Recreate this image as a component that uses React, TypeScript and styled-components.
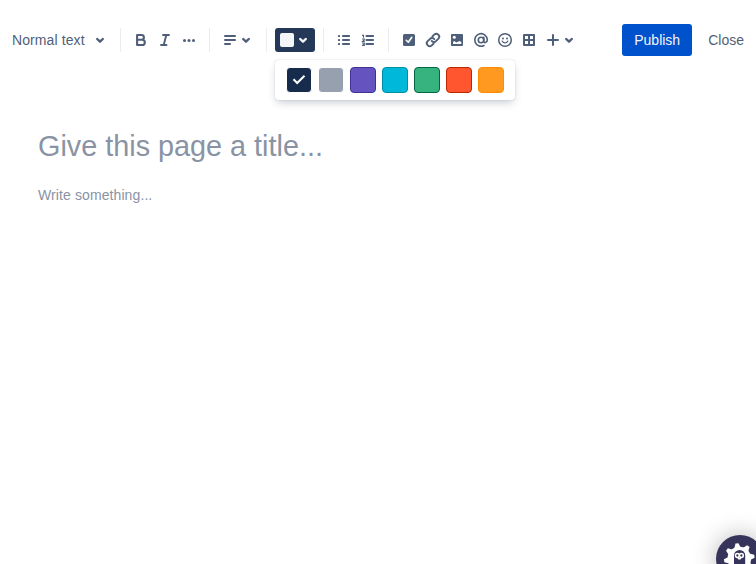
import React from "react";
import styled, { createGlobalStyle } from "styled-components";

const GlobalStyle = createGlobalStyle`
  * { box-sizing: border-box; }
  html, body { margin: 0; height: 100%; overflow: hidden; background: #fff; }
  body { font-family: "Liberation Sans", Arial, sans-serif; font-size: 14px; line-height: 20px; color: #505f79; }
  button { font: inherit; border: 0; margin: 0; padding: 0; background: none; color: inherit; }
`;

const Toolbar = styled.header`
  display: flex;
  align-items: center;
  height: 80px;
  padding: 0 12px;
`;

const Group = styled.div`
  display: flex;
  align-items: center;
  height: 24px;
  & + & {
    margin-left: 8px;
    padding-left: 8px;
    border-left: 1px solid #ebecf0;
  }
`;

const StyleSelect = styled.button`
  display: flex;
  align-items: center;
  justify-content: space-between;
  width: 100px;
  height: 24px;
  white-space: nowrap;
  letter-spacing: 0.1px;
`;

const IconButton = styled.button`
  display: flex;
  width: 24px;
  height: 24px;
`;

const MenuButton = styled.button`
  display: flex;
  width: 40px;
  height: 24px;
  svg + svg { margin-left: -8px; }
`;

const ColorAnchor = styled.div`
  position: relative;
`;

const ColorButton = styled.button`
  display: flex;
  align-items: center;
  width: 40px;
  height: 24px;
  padding-left: 5px;
  border-radius: 3px;
  background: #253858;
  color: #f4f5f7;
  svg { margin-left: -3px; }
`;

const CurrentColor = styled.span`
  width: 14px;
  height: 14px;
  border-radius: 2px;
  background: #f4f5f7;
  flex: none;
`;

const Palette = styled.div`
  position: absolute;
  top: 32px;
  left: 0;
  display: flex;
  align-items: center;
  gap: 6px;
  width: 240px;
  height: 40px;
  padding: 0 11px;
  border-radius: 3px;
  background: #fff;
  box-shadow: 0 4px 8px -2px rgba(9, 30, 66, 0.25), 0 0 1px rgba(9, 30, 66, 0.31);
`;

const Swatch = styled.button<{ $fill: string; $edge: string }>`
  display: flex;
  align-items: center;
  justify-content: center;
  width: 26px;
  height: 26px;
  flex: none;
  color: #fff;
  border: 1px solid ${(p) => p.$edge};
  border-radius: 4px;
  background: ${(p) => p.$fill};
`;

const Actions = styled.div`
  display: flex;
  align-items: center;
  gap: 16px;
  margin-left: auto;
`;

const PublishButton = styled.button`
  height: 32px;
  width: 70px;
  border-radius: 3px;
  background: #0052cc;
  color: #f4f5f7;
`;

const CloseButton = styled.button`
  height: 32px;
`;

const Editor = styled.main`
  padding: 46px 38px 0;
  color: #8993a4;
`;

const Title = styled.h1`
  margin: 0;
  font-size: 28.8px;
  font-weight: 400;
  line-height: 40px;
`;

const Body = styled.p`
  margin: 19px 0 0;
  letter-spacing: 0.1px;
`;

const HelpBadge = styled.button`
  position: fixed;
  left: 716px;
  top: 535px;
  width: 48px;
  height: 48px;
  border-radius: 50%;
  background: #36345a;
  box-shadow: 0 0 24px rgba(0, 0, 0, 0.28);
  svg { display: block; }
`;

const Glyph = styled.svg`
  display: block;
  flex: none;
  width: 24px;
  height: 24px;
  fill: currentColor;
  fill-rule: evenodd;
`;

const Icon = ({ children }: { children: React.ReactNode }) => (
  <Glyph viewBox="0 0 24 24">{children}</Glyph>
);

const line = { fill: "none", stroke: "currentColor", strokeLinecap: "round", strokeLinejoin: "round" } as const;

const Chevron = () => (
  <Icon>
    <path {...line} strokeWidth="2.4" d="M9.2 11l2.8 2.700L14.800 11" />
  </Icon>
);

const Bold = () => (
  <Icon>
    <path {...line} strokeWidth="2.100" d="M8.100 7h4.400a2.400 2.400 0 0 1 0 4.800H8.100zM8.100 11.800h5.100a2.600 2.600 0 0 1 0 5.200H8.100z" />
  </Icon>
);

const Italic = () => (
  <Icon>
    <path {...line} strokeWidth="1.900" d="M10 7H16M8 17h5.500M13.300 7l-2.600 10" />
  </Icon>
);

const More = () => (
  <Icon>
    <circle cx="7.500" cy="12.500" r="1.500" />
    <circle cx="12" cy="12.500" r="1.500" />
    <circle cx="16.500" cy="12.500" r="1.500" />
  </Icon>
);

const AlignLeft = () => (
  <Icon>
    <rect x="6" y="7" width="12" height="2" rx="1" />
    <rect x="6" y="11" width="12" height="2" rx="1" />
    <rect x="6" y="15" width="7" height="2" rx="1" />
  </Icon>
);

const BulletList = () => (
  <Icon>
    {[7, 11, 15].map((y) => (
      <g key={y}>
        <rect x="6" y={y} width="2" height="2" rx="0.6" />
        <rect x="10" y={y} width="8" height="2" rx="0.8" />
      </g>
    ))}
  </Icon>
);

const NumberList = () => (
  <Icon>
    {[7, 11, 15].map((y) => (
      <rect key={y} x="9.500" y={y} width="8.500" height="2" rx="0.8" />
    ))}
    <path
      fill="none"
      stroke="currentColor"
      strokeWidth="1.100"
      d="M6 7.400h1.500V9.800M6 11h2.300v.8L6.500 13.400h2.300M6 15h2.300v2.500H6M6.600 16.200h1.800"
    />
  </Icon>
);

const Task = () => (
  <Icon>
    <rect x="6" y="6" width="12" height="12" rx="1.500" />
    <path d="M9.300 12.300l2 2 3.500-5" fill="none" stroke="#fff" strokeWidth="1.600" strokeLinecap="round" strokeLinejoin="round" />
  </Icon>
);

const LinkIcon = () => (
  <Icon>
    <g {...line} strokeWidth="1.900" transform="translate(12 12) rotate(-45)">
      <path d="M-2 2.900H-4.600a2.900 2.900 0 0 1 0-5.800H-1.200A2.900 2.900 0 0 1 1.600 .3" />
      <path d="M2-2.900H4.600a2.900 2.900 0 0 1 0 5.800H1.200A2.900 2.900 0 0 1-1.600-.3" />
    </g>
  </Icon>
);

const Picture = () => (
  <Icon>
    <rect x="6" y="6" width="12" height="12" rx="1" />
    <circle cx="9.300" cy="9.300" r="1.500" fill="#fff" />
    <path d="M8 16v-2l1.300-.9 2 1.500 3.200-1.700L16.300 14v2z" fill="#fff" />
  </Icon>
);

const Mention = () => (
  <Icon>
    <g {...line} strokeWidth="1.600">
      <circle cx="12" cy="12" r="2.700" />
      <path d="M14.800 9.300v3.900c0 2.300 3.500 1.900 3.500-1.400a6.300 6.300 0 1 0-3.300 5.700" />
    </g>
  </Icon>
);

const Emoji = () => (
  <Icon>
    <circle {...line} cx="12" cy="12" r="6.300" strokeWidth="1.500" />
    <circle cx="10" cy="10.500" r="1" />
    <circle cx="14" cy="10.500" r="1" />
    <path {...line} strokeWidth="1.300" d="M9.300 13.200c1.200 2.300 4.200 2.300 5.400 0" />
  </Icon>
);

const Table = () => (
  <Icon>
    <path {...line} strokeWidth="2" d="M7 7h10v10H7zM12 7v10M7 12h10" />
  </Icon>
);

const Plus = () => (
  <Icon>
    <path {...line} strokeWidth="2" d="M12 7v10M7 12h10" />
  </Icon>
);

const Check = () => (
  <Icon>
    <path {...line} strokeWidth="2" strokeLinecap="butt" strokeLinejoin="miter" d="M6.500 11.300l3.700 3.700 7.300-7.200" />
  </Icon>
);

const MascotArt = styled.svg`
  width: 48px;
  height: 48px;
`;

const Mascot = () => (
  <MascotArt viewBox="0 0 48 48">
    <g fill="#fff">
      <circle cx="23.300" cy="23.500" r="11.800" />
      {[0, 45, 90, 135, 180, 225, 270, 315].map((a) => (
        <path key={a} d="M19.800 13l1.800-4.800h3l1.800 4.800z" transform={`rotate(${a - 8} 23.300 23.500)`} />
      ))}
    </g>
    <path d="M16 37l2-7V20.500a5.600 5.600 0 0 1 11.200 0V30l2 7z" fill="#36345a" />
    <g fill="none" stroke="#fff" strokeWidth="1.500">
      <circle cx="21.400" cy="20.500" r="1.900" />
      <circle cx="25.400" cy="20.500" r="1.900" />
    </g>
    <path d="M21.300 22.800h4.200l-1 1.700h-2.200z" fill="#fff" />
  </MascotArt>
);

const colors = [
  { name: "Dark gray", fill: "#172b4d", edge: "#fff" },
  { name: "Light gray", fill: "#97a0af", edge: "#fff" },
  { name: "Purple", fill: "#6554c0", edge: "#403294" },
  { name: "Teal", fill: "#00b8d9", edge: "#008da6" },
  { name: "Green", fill: "#36b37e", edge: "#006644" },
  { name: "Red", fill: "#ff5630", edge: "#bf2600" },
  { name: "Orange", fill: "#ff991f", edge: "#ff8b00" },
];

export default function App() {
  return (
    <>
      <GlobalStyle />
      <Toolbar>
        <Group>
          <StyleSelect>
            Normal text
            <Chevron />
          </StyleSelect>
        </Group>
        <Group>
          <IconButton aria-label="Bold"><Bold /></IconButton>
          <IconButton aria-label="Italic"><Italic /></IconButton>
          <IconButton aria-label="More formatting"><More /></IconButton>
        </Group>
        <Group>
          <MenuButton aria-label="Alignment"><AlignLeft /><Chevron /></MenuButton>
        </Group>
        <Group>
          <ColorAnchor>
            <ColorButton aria-label="Text color"><CurrentColor /><Chevron /></ColorButton>
            <Palette>
              {colors.map((c, i) => (
                <Swatch key={c.name} aria-label={c.name} $fill={c.fill} $edge={c.edge}>
                  {i === 0 && <Check />}
                </Swatch>
              ))}
            </Palette>
          </ColorAnchor>
        </Group>
        <Group>
          <IconButton aria-label="Bullet list"><BulletList /></IconButton>
          <IconButton aria-label="Numbered list"><NumberList /></IconButton>
        </Group>
        <Group>
          <IconButton aria-label="Action item"><Task /></IconButton>
          <IconButton aria-label="Link"><LinkIcon /></IconButton>
          <IconButton aria-label="Image"><Picture /></IconButton>
          <IconButton aria-label="Mention"><Mention /></IconButton>
          <IconButton aria-label="Emoji"><Emoji /></IconButton>
          <IconButton aria-label="Table"><Table /></IconButton>
          <MenuButton aria-label="Insert"><Plus /><Chevron /></MenuButton>
        </Group>
        <Actions>
          <PublishButton>Publish</PublishButton>
          <CloseButton>Close</CloseButton>
        </Actions>
      </Toolbar>
      <Editor>
        <Title>Give this page a title...</Title>
        <Body>Write something...</Body>
      </Editor>
      <HelpBadge aria-label="Help"><Mascot /></HelpBadge>
    </>
  );
}
